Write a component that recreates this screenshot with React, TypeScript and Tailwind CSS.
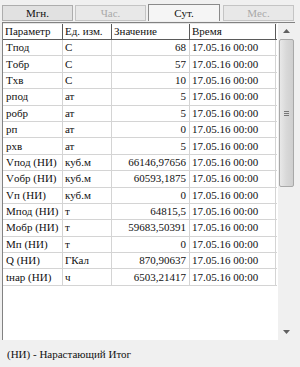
import React from "react";

const rows: [string, string, string][] = [
  ["Tпод", "С", "68"],
  ["Tобр", "С", "57"],
  ["Tхв", "С", "10"],
  ["pпод", "ат", "5"],
  ["pобр", "ат", "5"],
  ["pп", "ат", "0"],
  ["pхв", "ат", "5"],
  ["Vпод (НИ)", "куб.м", "66146,97656"],
  ["Vобр (НИ)", "куб.м", "60593,1875"],
  ["Vп (НИ)", "куб.м", "0"],
  ["Mпод (НИ)", "т", "64815,5"],
  ["Mобр (НИ)", "т", "59683,50391"],
  ["Mп (НИ)", "т", "0"],
  ["Q (НИ)", "ГКал", "870,90637"],
  ["tнар (НИ)", "ч", "6503,21417"],
];

export default function App() {
  return (
    <div className="w-[300px] h-[367px] bg-[#f0f0f0] font-['Liberation_Serif',serif] text-[11px] text-[#111] overflow-hidden flex flex-col">
      {/* Tabs */}
      <div className="flex gap-[2px] pl-[2px] pt-[5px] h-[22px]">
        <div className="w-[71px] h-[16px] border border-[#adadad] bg-[#e1e1e1] flex items-center justify-center leading-none">
          Мгн.
        </div>
        <div className="w-[71px] h-[16px] border border-[#c4c4c4] bg-[#e8e8e8] flex items-center justify-center leading-none text-[#a8a8a8]">
          Час.
        </div>
        <div className="w-[72px] h-[17px] -mt-[1px] border border-[#8a8a8a] border-b-0 bg-[#f5f5f5] flex items-center justify-center leading-none">
          Сут.
        </div>
        <div className="ml-[1px] w-[71px] h-[16px] border border-[#c4c4c4] bg-[#e8e8e8] flex items-center justify-center leading-none text-[#a8a8a8]">
          Мес.
        </div>
      </div>

      {/* List view */}
      <div className="ml-[2px] w-[293px] h-[318px] bg-white border-l border-t border-[#828282] flex">
        <div className="w-[275px] flex flex-col">
          {/* header */}
          <div className="flex h-[17px] border-b border-[#5a5a5a] border-t border-t-[#e5e5e5]">
            <div className="w-[60px] border-r border-[#5a5a5a] pl-[2px] flex items-center leading-none">Параметр</div>
            <div className="w-[49px] border-r border-[#5a5a5a] pl-[2px] flex items-center leading-none">Ед. изм.</div>
            <div className="w-[78px] border-r border-[#5a5a5a] pl-[2px] flex items-center leading-none">Значение</div>
            <div className="w-[86px] border-r border-[#5a5a5a] pl-[2px] flex items-center leading-none">Время</div>
          </div>
          {rows.map((r, i) => (
            <div key={i} className="flex h-[16.4px] border-b border-[#d4d4d4]">
              <div className="w-[60px] border-r border-[#d4d4d4] pl-[3px] flex items-center leading-none whitespace-nowrap">{r[0]}</div>
              <div className="w-[49px] border-r border-[#d4d4d4] pl-[2px] flex items-center leading-none whitespace-nowrap">{r[1]}</div>
              <div className="w-[78px] border-r border-[#d4d4d4] pr-[3px] flex items-center justify-end leading-none whitespace-nowrap">{r[2]}</div>
              <div className="w-[86px] border-r border-[#d4d4d4] pl-[2px] flex items-center leading-none whitespace-nowrap">17.05.16 00:00</div>
            </div>
          ))}
        </div>
        {/* scrollbar */}
        <div className="w-[17px] ml-[1px] bg-[#f0f0f0] flex flex-col">
          <div className="h-[16px] flex items-center justify-center">
            <svg width="7" height="4" viewBox="0 0 7 4"><path d="M0 4 L3.5 0 L7 4 Z" fill="#606060" /></svg>
          </div>
          <div className="mx-[1px] h-[148px] bg-gradient-to-r from-[#e8e8e8] via-[#d8d8d8] to-[#cfcfcf] border border-[#a8a8a8] rounded-[2px] flex items-center justify-center">
            <div className="flex flex-col gap-[1px]">
              <div className="w-[5px] h-[1px] bg-[#777]" />
              <div className="w-[5px] h-[1px] bg-[#777]" />
              <div className="w-[5px] h-[1px] bg-[#777]" />
            </div>
          </div>
          <div className="flex-1" />
          <div className="h-[16px] flex items-center justify-center">
            <svg width="7" height="4" viewBox="0 0 7 4"><path d="M0 0 L3.5 4 L7 0 Z" fill="#606060" /></svg>
          </div>
        </div>
      </div>

      <div className="pl-[7px] pt-[9px] leading-none">(НИ) - Нарастающий Итог</div>
    </div>
  );
}
